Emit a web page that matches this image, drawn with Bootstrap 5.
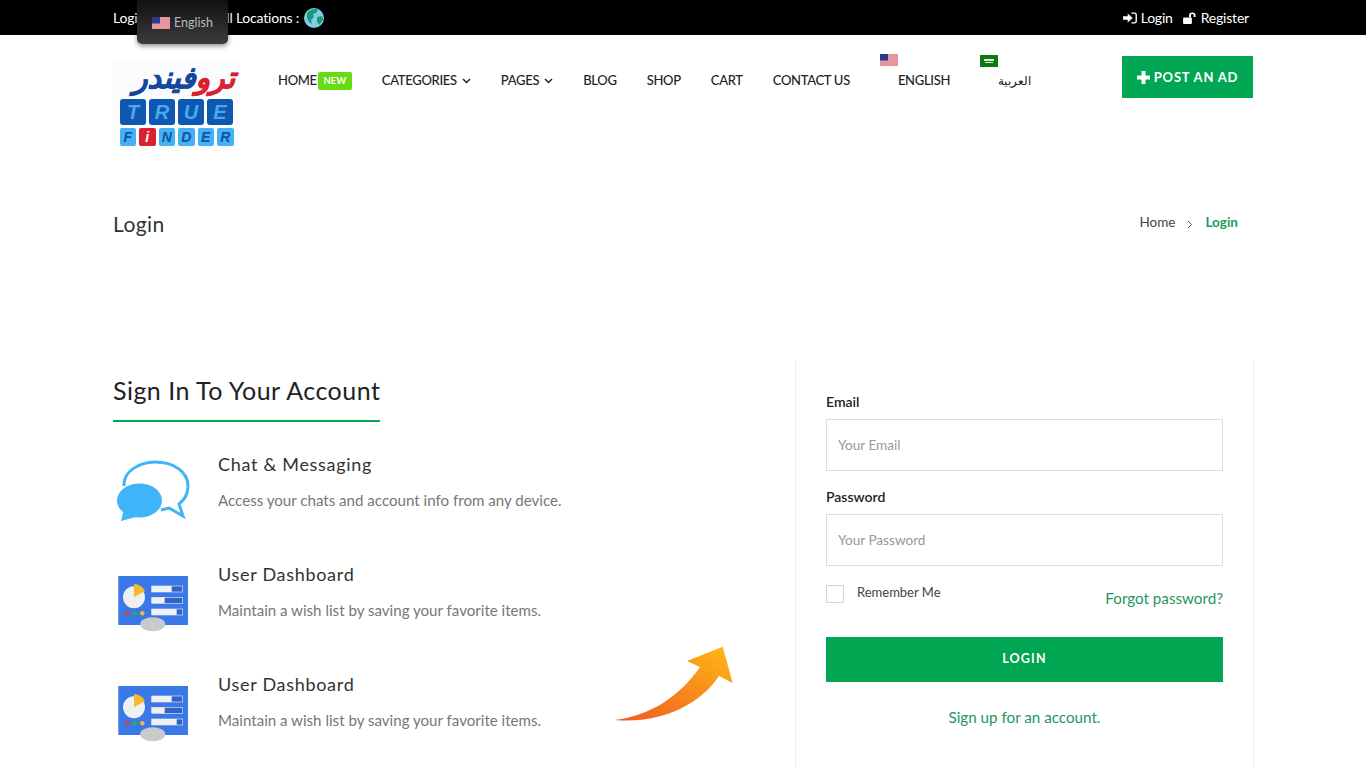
<!DOCTYPE html>
<html lang="en">
  <head>
    <meta charset="utf-8" />
    <meta name="viewport" content="width=device-width, initial-scale=1" />
    <title>Login</title>
    <link href="https://cdn.jsdelivr.net/npm/bootstrap@5.3.3/dist/css/bootstrap.min.css" rel="stylesheet" />
    <style>
      html, body { height: 768px; overflow: hidden; }
      body { font-family: "Lato", "Liberation Sans", sans-serif; color: #222; background: #fff; font-size: 15px; }
      a { text-decoration: none; }
      .wrap { width: 1140px; margin: 0 auto; }

      .topbar { background: #000; height: 35px; color: #fff; font-size: 14px; letter-spacing: -.2px; }
      .topbar a { color: #fff; }
      .all-loc { margin-left: 68px; }
      .globe-ico { margin-left: 1px; }
      .login-link { margin-right: 10px; }
      .lang-pop { position: absolute; left: 137px; top: 0; width: 91px; height: 44px; padding-top: 14px; border-radius: 0 0 5px 5px; background: linear-gradient(#111, #3c3c3c); box-shadow: 0 2px 5px rgba(0,0,0,.45); color: #bbb; font-size: 12.5px; }
      .lang-pop svg { margin-top: 3px; }

      .mainbar { height: 125px; }
      .logo-box { width: 127px; height: 90px; margin-top: 25px; background: #fbfcfe; }
      .logo-ar { font: italic 700 30px/36px "DejaVu Sans", "Noto Sans", sans-serif; height: 39px; padding-right: 5px; color: #17479c; -webkit-text-stroke: .6px; white-space: nowrap; }
      .logo-ar b { color: #d8222f; }
      .tile-row { gap: 3px; margin-bottom: 3px; }
      .tile { font: italic 700 20px/26px "Liberation Sans", sans-serif; width: 26px; height: 26px; background: #0f57b0; color: #4aa8ee; border-radius: 3px; text-align: center; }
      .tile-sm { font: italic 700 14px/18px "Liberation Sans", sans-serif; width: 16.5px; height: 18px; background: #45b1f6; color: #10539f; border-radius: 2px; text-align: center; }
      .tile-red { background: #d8222f; color: #fff; }

      .menu { padding-left: 38px; font-size: 13px; letter-spacing: -.3px; font-weight: 500; gap: 30px; margin-top: 37px; height: 18px; }
      .menu a { color: #222; white-space: nowrap; }
      .new-tag { background: #66dd12; color: #fff; font-size: 9.5px; font-weight: 700; letter-spacing: 0; padding: 0; border-radius: 2px; height: 18px; line-height: 18px; width: 34px; text-align: center; margin-left: 1px; }
      .chev { width: 9px; height: 6px; margin-left: 5px; vertical-align: 1px; }
      .flag-item { position: relative; margin-left: 18px; }
      .flag-item svg { position: absolute; top: -17px; left: -18px; }
      .flag-ar { font-size: 12px; letter-spacing: 0; }
      .post-btn { background: #00a651; color: #fff; font-size: 13px; font-weight: 700; letter-spacing: .8px; width: 131px; height: 42px; margin-top: 21px; border-radius: 0; white-space: nowrap; padding: 1px 0 0; }

      .crumb-row { height: 200px; padding-top: 51px; }
      .page-title { font-size: 21px; font-weight: 400; margin: 0; color: #333; line-height: 26px; letter-spacing: .4px; }
      .crumbs { font-size: 13.5px; padding-right: 15px; padding-top: 1px; color: #444; }
      .crumbs b { color: #1d9a5e; }

      .left-col { width: 682px; flex: none; position: relative; }
      .sign-title { display: inline-block; font-size: 25px; font-weight: 400; color: #222; letter-spacing: .47px; line-height: 30px; padding: 15px 0 15px; margin: 0 0 29px; border-bottom: 2px solid #00a651; }
      .feat { height: 110px; }
      .feat-ico { width: 105px; flex: none; }
      .feat h5 { font-size: 18px; font-weight: 400; letter-spacing: .7px; color: #333; margin: 2px 0 14px; line-height: 22px; }
      .feat p { color: #777; font-size: 15.1px; line-height: 22px; margin: 0; }
      .arrow-pic { position: absolute; left: 487px; top: 270px; }

      .login-panel { width: 459px; flex: none; border-left: 1px solid #eee; border-right: 1px solid #eee; padding: 32px 30px 0; height: 420px; }
      .login-panel label.fld { font-size: 14px; font-weight: 600; color: #222; line-height: 20px; margin-bottom: 7px; display: block; }
      .login-panel .form-control { height: 52px; border-radius: 0; border: 1px solid #ddd; padding: 0 11px; font-size: 13.6px; font-family: inherit; margin-bottom: 16px; }
      .login-panel .form-control::placeholder { color: #999; }
      .check-box { width: 18px; height: 18px; border: 1px solid #d5d5d5; margin: 3px 13px 0 0; border-radius: 0; }
      .remember { font-size: 13px; color: #444; line-height: 20px; }
      .forgot { margin-top: 5px; }
      .forgot, .signup { color: #1f9660; font-size: 15.2px; }
      .login-btn { background: #00a651; color: #fff; height: 45px; width: 100%; border: 0; border-radius: 0; font-size: 12.5px; font-weight: 700; letter-spacing: 1.2px; margin-top: 27px; }
    </style>
  </head>
  <body>
    <div class="topbar">
      <div class="wrap d-flex justify-content-between align-items-center h-100">
        <div class="d-flex align-items-center gap-1">
          <span>Login</span><span class="all-loc">All Locations :</span>
          <svg class="globe-ico" width="20" height="20" viewBox="0 0 20 20">
            <circle cx="10" cy="10" r="10" fill="#7fd0e6" />
            <path d="M3 5 C6 1 12 0 14 2 L12 5 L9 6 L10 9 L7 12 L8 16 L5 14 L3 10 Z" fill="#1c9a78" />
            <path d="M13 9 L18 8 L19 12 L15 17 L13 14 Z" fill="#1c9a78" />
          </svg>
        </div>
        <div class="d-flex align-items-center pe-1">
          <a href="#" class="d-flex align-items-center login-link">
            <svg width="14" height="12" viewBox="0 0 15 13" class="me-1" fill="#fff"><path d="M0 4.500h5V1.500L10.500 6.500 5 11.500V8.500H0z" /><path d="M9 0.500h3.500Q15 0.500 15 3v7q0 2.500-2.500 2.500H9v-1.500h3.300q1.200 0 1.200-1.200V3.200q0-1.200-1.200-1.200H9z" /></svg>
            Login
          </a>
          <a href="#" class="d-flex align-items-center">
            <svg width="14" height="12" viewBox="0 0 15 13" class="me-1" fill="#fff"><rect x="0" y="6" width="9.500" height="7" rx="1" /><path d="M6.500 6V3.500Q6.500 0.500 10 0.500 13.500 0.500 13.500 3.500V5.500H11.500V3.500Q11.500 2.300 10 2.300 8.500 2.300 8.500 3.500V6z" /></svg>
            Register
          </a>
        </div>
      </div>
    </div>
    <div class="lang-pop d-flex justify-content-center gap-1">
      <svg width="18" height="12" viewBox="0 0 18 12"><use href="#us-flag" /></svg>
      <span>English</span>
    </div>

    <svg width="0" height="0" class="d-none">
      <symbol id="us-flag" viewBox="0 0 18 12">
        <rect width="18" height="12" fill="#fff" />
        <path d="M0 0h18v1H0zM0 2h18v1H0zM0 4h18v1H0zM0 6h18v1H0zM0 8h18v1H0zM0 10h18v1H0z" fill="#c9303c" transform="translate(0 .5)" />
        <rect width="8" height="6.500" fill="#2f3a8c" />
      </symbol>
      <symbol id="dash-ico" viewBox="13 1 80 80">
        <rect x="18.300" y="16" width="69.700" height="49" fill="#3b78e7" />
        <circle cx="34" cy="37.300" r="11" fill="#eef0f2" />
        <path d="M34 37.300 L34 24 A13 13 0 0 1 45 31z" fill="#f6b92b" />
        <rect x="51.700" y="26" width="31" height="6" fill="#2f63c4" stroke="#eef0f2" stroke-width=".6" />
        <rect x="51.700" y="26" width="20" height="6" fill="#eef0f2" />
        <rect x="51.700" y="37.300" width="31" height="6" fill="#2f63c4" stroke="#eef0f2" stroke-width=".6" />
        <rect x="51.700" y="37.300" width="13" height="6" fill="#eef0f2" />
        <rect x="51.700" y="49" width="31" height="6" fill="#2f63c4" stroke="#eef0f2" stroke-width=".6" />
        <rect x="51.700" y="49" width="25" height="6" fill="#eef0f2" />
        <circle cx="27.300" cy="53.300" r="2.200" fill="#d0443c" />
        <circle cx="34.700" cy="53.300" r="2.200" fill="#37a853" />
        <circle cx="42.300" cy="53.300" r="2.200" fill="#f6b92b" />
        <ellipse cx="52.700" cy="64.300" rx="12.500" ry="7" fill="#c9cacc" />
      </symbol>
    </svg>

    <div class="wrap d-flex mainbar">
      <div class="logo-box">
        <div class="logo-ar text-end" dir="rtl"><b>ترو</b>فيندر</div>
        <div class="d-flex justify-content-center tile-row">
          <span class="tile">T</span><span class="tile">R</span><span class="tile">U</span><span class="tile">E</span>
        </div>
        <div class="d-flex justify-content-center tile-row">
          <span class="tile-sm">F</span><span class="tile-sm tile-red">i</span><span class="tile-sm">N</span><span class="tile-sm">D</span><span class="tile-sm">E</span><span class="tile-sm">R</span>
        </div>
      </div>
      <nav class="d-flex menu flex-grow-1 align-items-center">
        <a href="#" class="d-flex align-items-center">HOME <span class="new-tag">NEW</span></a>
        <a href="#">CATEGORIES<svg class="chev" viewBox="0 0 9 6"><path d="M1 1l3.500 3.500L8 1" fill="none" stroke="#222" stroke-width="1.500" /></svg></a>
        <a href="#">PAGES<svg class="chev" viewBox="0 0 9 6"><path d="M1 1l3.500 3.500L8 1" fill="none" stroke="#222" stroke-width="1.500" /></svg></a>
        <a href="#">BLOG</a>
        <a href="#">SHOP</a>
        <a href="#">CART</a>
        <a href="#">CONTACT US</a>
        <a href="#" class="flag-item"><svg width="18" height="12" viewBox="0 0 18 12"><use href="#us-flag" /></svg>ENGLISH</a>
        <a href="#" class="flag-item flag-ar" dir="rtl" lang="ar"><svg width="18" height="12" viewBox="0 0 18 12"><rect width="18" height="12" fill="#0b7a10" /><rect x="4" y="4" width="10" height="2" fill="#dfeedd" /><rect x="5" y="7" width="8" height="1" fill="#dfeedd" /></svg>العربية</a>
      </nav>
      <a href="#" class="btn post-btn d-flex align-items-center justify-content-center gap-1">
        <svg width="13" height="13" viewBox="0 0 13 13" fill="#fff"><path d="M4.500 0h4v4.500H13v4H8.500V13h-4V8.500H0v-4h4.500z" /></svg>
        POST AN AD
      </a>
    </div>

    <div class="wrap d-flex justify-content-between crumb-row">
      <h1 class="page-title">Login</h1>
      <div class="crumbs d-flex gap-2">
        <span>Home</span>
        <svg width="6" height="9" viewBox="0 0 6 9" class="mx-1 mt-2"><path d="M1 1l3.500 3.500L1 8" fill="none" stroke="#555" /></svg>
        <b>Login</b>
      </div>
    </div>

    <div class="wrap d-flex">
      <div class="left-col">
        <h2 class="sign-title">Sign In To Your Account</h2>

        <div class="feat d-flex">
          <div class="feat-ico">
            <svg width="80" height="80" viewBox="13 12 80 80">
              <path d="M24 47 C23 32 40 23 55 23 C74 23 88 33 88 47 C88 56 83 62 79 65 L83 77 L69 69 L61 71" fill="none" stroke="#40b4f8" stroke-width="3" stroke-linejoin="miter" />
              <ellipse cx="39.500" cy="61.500" rx="22.500" ry="17" fill="#40b4f8" />
              <path d="M21 82 L24 70 L36 78z" fill="#40b4f8" />
            </svg>
          </div>
          <div>
            <h5>Chat &amp; Messaging</h5>
            <p>Access your chats and account info from any device.</p>
          </div>
        </div>

        <div class="feat d-flex">
          <div class="feat-ico">
            <svg width="80" height="80" viewBox="0 0 80 80"><use href="#dash-ico" /></svg>
          </div>
          <div>
            <h5>User Dashboard</h5>
            <p>Maintain a wish list by saving your favorite items.</p>
          </div>
        </div>

        <div class="feat d-flex">
          <div class="feat-ico">
            <svg width="80" height="80" viewBox="0 0 80 80"><use href="#dash-ico" /></svg>
          </div>
          <div>
            <h5>User Dashboard</h5>
            <p>Maintain a wish list by saving your favorite items.</p>
          </div>
        </div>

        <svg class="arrow-pic" width="150" height="100" viewBox="0 0 150 100">
          <defs>
            <linearGradient id="arrow-fill" x1="0" y1="1" x2="1" y2="0">
              <stop offset="0" stop-color="#ee5a24" />
              <stop offset="1" stop-color="#ffb914" />
            </linearGradient>
          </defs>
          <path d="M15 90 C50 86 80 66 100 37 L87 31 L122.700 16.700 L132.700 53 L119 46 C100 75 60 94 15 90z" fill="url(#arrow-fill)" />
        </svg>
      </div>

      <form class="login-panel">
        <label class="fld">Email</label>
        <input type="text" class="form-control" placeholder="Your Email" />
        <label class="fld">Password</label>
        <input type="password" class="form-control" placeholder="Your Password" />
        <div class="d-flex justify-content-between">
          <div class="d-flex">
            <div class="check-box"></div>
            <span class="remember">Remember Me</span>
          </div>
          <a href="#" class="forgot">Forgot password?</a>
        </div>
        <button type="button" class="btn login-btn">LOGIN</button>
        <div class="text-center mt-4"><a href="#" class="signup">Sign up for an account.</a></div>
      </form>
    </div>

    <script src="https://cdn.jsdelivr.net/npm/bootstrap@5.3.3/dist/js/bootstrap.bundle.min.js"></script>
  </body>
</html>
